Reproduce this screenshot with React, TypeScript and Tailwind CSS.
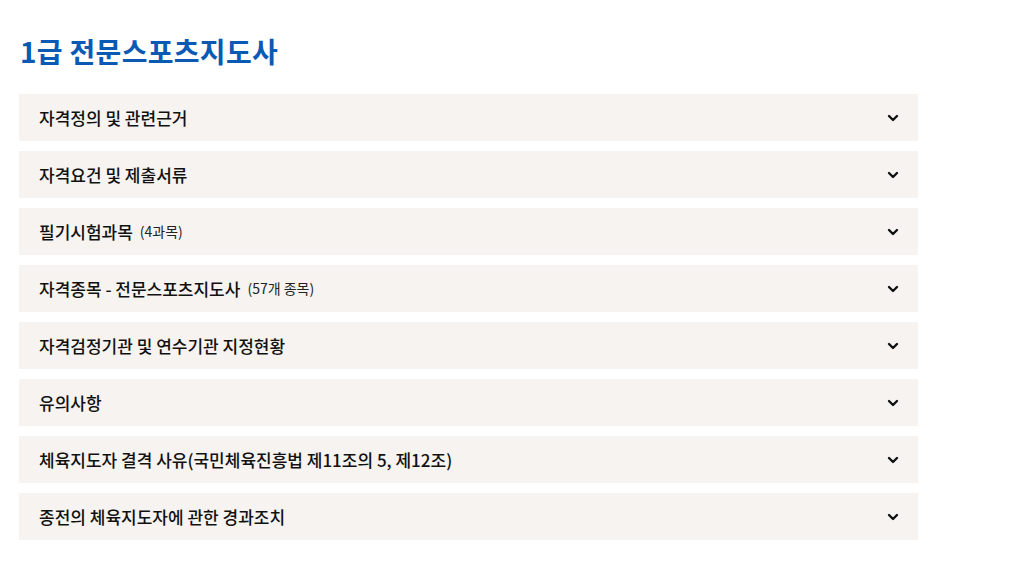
import { ChevronDown } from "lucide-react";

const items: { title: string; note?: string }[] = [
  { title: "자격정의 및 관련근거" },
  { title: "자격요건 및 제출서류" },
  { title: "필기시험과목", note: "(4과목)" },
  { title: "자격종목 - 전문스포츠지도사", note: "(57개 종목)" },
  { title: "자격검정기관 및 연수기관 지정현황" },
  { title: "유의사항" },
  { title: "체육지도자 결격 사유(국민체육진흥법 제11조의 5, 제12조)" },
  { title: "종전의 체육지도자에 관한 경과조치" },
];

export default function App() {
  return (
    <div
      className="min-h-[568px] bg-white pl-[19px] pt-[32px]"
      style={{ fontFamily: '"Noto Sans CJK KR", "Noto Sans", sans-serif' }}
    >
      <h1 className="pl-px text-[28px] leading-[38px] font-bold tracking-[0.3px] text-[#0a59b3]">
        1급 전문스포츠지도사
      </h1>

      <ul className="mt-[24px] flex w-[899px] flex-col gap-[10px]">
        {items.map((item) => (
          <li
            key={item.title}
            className="flex h-[47px] items-center justify-between bg-[#f6f3f0] pr-[17px] pl-[20px]"
          >
            <span className="flex items-center gap-[7px] text-[#111]">
              <span className="text-[17px] font-medium">{item.title}</span>
              {item.note && <span className="text-[14px] text-[#222]">{item.note}</span>}
            </span>
            <ChevronDown size={16} strokeWidth={3.6} className="text-[#111]" />
          </li>
        ))}
      </ul>
    </div>
  );
}
